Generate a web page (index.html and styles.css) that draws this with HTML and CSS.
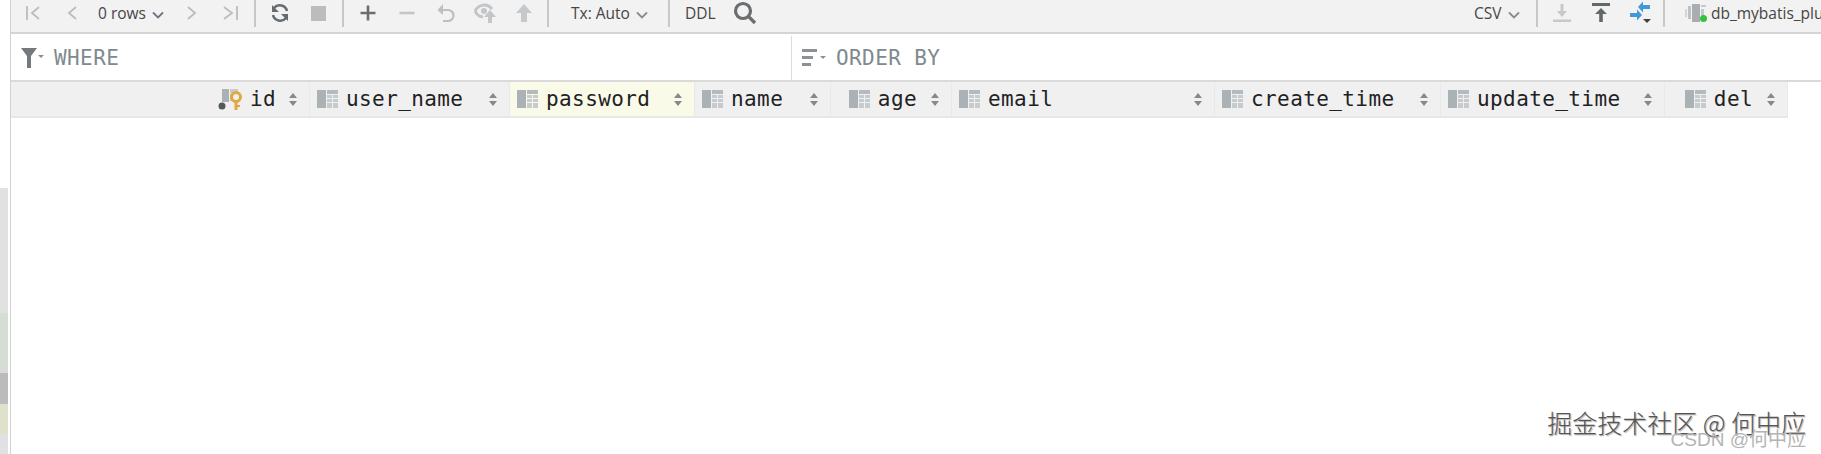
FILE: index.html
```html
<!DOCTYPE html>
<html lang="en">
<head>
    <meta charset="UTF-8">
    <title>Console result</title>
    <link rel="stylesheet" href="styles.css">
</head>
<body>
<div class="page">
    <!-- left edge of the window behind -->
    <div class="strip">
        <div class="s-white"></div>
        <div class="s-grey"></div>
        <div class="s-green"></div>
        <div class="s-dark"></div>
        <div class="s-yellow"></div>
        <div class="s-last"></div>
    </div>
    <div class="main">
        <div class="toolbar">
            <span class="btn"><svg width="18" height="18" viewBox="0 0 18 18" fill="none" stroke="#b9bdc1" stroke-width="1.8"><path d="M3 2v14M15 3L8 9l7 6"/></svg></span>
            <span class="btn"><svg width="18" height="18" viewBox="0 0 18 18" fill="none" stroke="#b9bdc1" stroke-width="1.8"><path d="M13 3L6 9l7 6"/></svg></span>
            <span class="drop rows">0 rows<svg class="chev" width="12" height="8" viewBox="0 0 12 8" fill="none" stroke="#6f7478" stroke-width="1.8"><path d="M1 1.5l5 5 5-5"/></svg></span>
            <span class="btn"><svg width="18" height="18" viewBox="0 0 18 18" fill="none" stroke="#b9bdc1" stroke-width="1.8"><path d="M5 3l7 6-7 6"/></svg></span>
            <span class="btn"><svg width="18" height="18" viewBox="0 0 18 18" fill="none" stroke="#b9bdc1" stroke-width="1.8"><path d="M2 3l8 6-8 6M15 2v14"/></svg></span>
            <i class="sep"></i>
            <span class="btn"><svg width="20" height="20" viewBox="0 0 20 20" fill="none" stroke="#666b6f" stroke-width="2.6"><path d="M17 8A7.5 7.5 0 0 0 4 5M3 12a7.500 7.500 0 0 0 13 3"/><path d="M2 2v7h7M18 18v-7h-7" stroke="none" fill="#666b6f"/></svg></span>
            <span class="btn"><span class="stop"></span></span>
            <i class="sep"></i>
            <span class="btn"><svg width="18" height="18" viewBox="0 0 18 18" fill="none" stroke="#686d70" stroke-width="2.6"><path d="M9 1.500v15M1.500 9h15"/></svg></span>
            <span class="btn"><svg width="18" height="18" viewBox="0 0 18 18" fill="none" stroke="#c3c6c8" stroke-width="2.600"><path d="M1.500 9h15"/></svg></span>
            <span class="btn"><svg width="20" height="20" viewBox="0 0 20 20" fill="none" stroke="#bdbfc0" stroke-width="2.200"><path d="M4 7h8a5 5 0 0 1 0 11H7"/><path d="M7 1v11L1.500 7z" fill="#bdbfc0" stroke="none"/></svg></span>
            <span class="btn"><svg width="22" height="22" viewBox="0 0 22 22" fill="none"><path d="M1 9c4-7 12-8 17-2" stroke="#c3c6c8" stroke-width="3"/><path d="M1 9c2 4 5 6 8 6" stroke="#c3c6c8" stroke-width="3"/><circle cx="10" cy="9" r="3" fill="#c3c6c8"/><path d="M16 8l6 7h-4v6h-4v-6h-4z" fill="#c3c6c8"/></svg></span>
            <span class="btn"><svg width="20" height="20" viewBox="0 0 20 20"><path d="M10 1l8 9h-5v9H7v-9H2z" fill="#c6c9cb"/></svg></span>
            <i class="sep"></i>
            <span class="drop tx">Tx: Auto<svg class="chev" width="12" height="8" viewBox="0 0 12 8" fill="none" stroke="#868b8f" stroke-width="1.8"><path d="M1 1.500l5 5 5-5"/></svg></span>
            <i class="sep"></i>
            <span class="drop ddl">DDL</span>
            <span class="btn search"><svg width="24" height="24" viewBox="0 0 24 24" fill="none" stroke="#6a6e71" stroke-width="3.200"><circle cx="10" cy="10" r="7.500"/><path d="M15.500 15.500l6.500 6.500"/></svg></span>
            <span class="drop csv">CSV<svg class="chev" width="12" height="8" viewBox="0 0 12 8" fill="none" stroke="#868b8f" stroke-width="1.800"><path d="M1 1.500l5 5 5-5"/></svg></span>
            <i class="sep"></i>
            <span class="btn"><svg width="20" height="20" viewBox="0 0 20 20" fill="#c6c9cb"><path d="M8.500 1h3v7H15l-5 6-5-6h3.500z"/><path d="M1 16.500h18v2.500H1z"/></svg></span>
            <span class="btn"><svg width="20" height="20" viewBox="0 0 20 20" fill="#63686b"><path d="M1 0h18v3H1z"/><path d="M10 5l6 6h-4.200v8H8.200v-8H4z"/></svg></span>
            <span class="btn"><svg width="24" height="24" viewBox="0 0 24 24"><path d="M2 13h7V9.500l5 5.500-5 5.500V17H2z" fill="#3d9ad6" transform="translate(0 -1)"/><path d="M22 7h-7V3.500L10 9l5 5.500V11h7z" fill="#3d9ad6" transform="translate(0 -3)"/><path d="M15 18h8l-4 4z" fill="#3e4245"/></svg></span>
            <i class="sep"></i>
            <span class="db">
                <svg width="22" height="20" viewBox="0 0 22 20"><path d="M0 6h2v8H0z" fill="#d3d5d7"/><path d="M3 3h3v13H3z" fill="#bfc2c4"/><path d="M7 1h8v18H7z" fill="#a9adb0"/><path d="M16 2h5v2h-5zM16 6h3v7h-3z" fill="#c6c9cb"/><circle cx="18.500" cy="15.500" r="3.500" fill="#2fc43c"/></svg>
                <span class="db-name">db_mybatis_plus</span>
            </span>
        </div>
        <div class="filters">
            <div class="where">
                <svg width="23" height="20" viewBox="0 0 23 20"><path d="M0 0h16l-6 8v12H6V8z" fill="#75797c"/><path d="M17 7h6l-3 3z" fill="#8a8e91"/></svg>
                <span class="f-label">WHERE</span>
            </div>
            <div class="order">
                <svg width="24" height="18" viewBox="0 0 24 18" fill="#8d9194"><path d="M0 0h15v3H0zM0 7h11v3H0zM0 14h9v3H0z"/><path d="M18 7h6l-3 3z"/></svg>
                <span class="f-label">ORDER BY</span>
            </div>
        </div>
        <div class="head">
            <div class="cell right pk">
                <svg class="ic" width="25" height="21" viewBox="0 0 25 21"><path d="M4 0h7v13H4z" fill="#aab2b6"/><path d="M12 0h8v4h-8zM12 5h3v3h-3zM12 9h3v3h-3z" fill="#c6cbcd"/><circle cx="4" cy="17" r="3.500" fill="#54585b"/><circle cx="18" cy="8" r="4.500" fill="none" stroke="#e0a83e" stroke-width="3"/><path d="M16.500 12h3v9h-3z" fill="#e0a83e"/><path d="M19 16h3v2h-3z" fill="#e0a83e"/></svg>
                <span class="lbl">id</span><svg class="sort" width="8" height="13" viewBox="0 0 8 13" fill="#85898c"><path d="M4 0l4 5H0zM0 8h8l-4 5z"/></svg>
            </div>
            <div class="cell">
                <svg class="ic" width="21" height="18" viewBox="0 0 21 18"><use href="#tbl"/></svg>
                <span class="lbl">user_name</span><svg class="sort" width="8" height="13" viewBox="0 0 8 13" fill="#85898c"><path d="M4 0l4 5H0zM0 8h8l-4 5z"/></svg>
            </div>
            <div class="cell current">
                <svg class="ic" width="21" height="18" viewBox="0 0 21 18"><use href="#tbl"/></svg>
                <span class="lbl">password</span><svg class="sort" width="8" height="13" viewBox="0 0 8 13" fill="#85898c"><path d="M4 0l4 5H0zM0 8h8l-4 5z"/></svg>
            </div>
            <div class="cell">
                <svg class="ic" width="21" height="18" viewBox="0 0 21 18"><use href="#tbl"/></svg>
                <span class="lbl">name</span><svg class="sort" width="8" height="13" viewBox="0 0 8 13" fill="#85898c"><path d="M4 0l4 5H0zM0 8h8l-4 5z"/></svg>
            </div>
            <div class="cell right">
                <svg class="ic" width="21" height="18" viewBox="0 0 21 18"><use href="#tbl"/></svg>
                <span class="lbl">age</span><svg class="sort" width="8" height="13" viewBox="0 0 8 13" fill="#85898c"><path d="M4 0l4 5H0zM0 8h8l-4 5z"/></svg>
            </div>
            <div class="cell">
                <svg class="ic" width="21" height="18" viewBox="0 0 21 18"><use href="#tbl"/></svg>
                <span class="lbl">email</span><svg class="sort" width="8" height="13" viewBox="0 0 8 13" fill="#85898c"><path d="M4 0l4 5H0zM0 8h8l-4 5z"/></svg>
            </div>
            <div class="cell">
                <svg class="ic" width="21" height="18" viewBox="0 0 21 18"><use href="#tbl"/></svg>
                <span class="lbl">create_time</span><svg class="sort" width="8" height="13" viewBox="0 0 8 13" fill="#85898c"><path d="M4 0l4 5H0zM0 8h8l-4 5z"/></svg>
            </div>
            <div class="cell">
                <svg class="ic" width="21" height="18" viewBox="0 0 21 18"><use href="#tbl"/></svg>
                <span class="lbl">update_time</span><svg class="sort" width="8" height="13" viewBox="0 0 8 13" fill="#85898c"><path d="M4 0l4 5H0zM0 8h8l-4 5z"/></svg>
            </div>
            <div class="cell right">
                <svg class="ic" width="21" height="18" viewBox="0 0 21 18"><use href="#tbl"/></svg>
                <span class="lbl">del</span><svg class="sort" width="8" height="13" viewBox="0 0 8 13" fill="#85898c"><path d="M4 0l4 5H0zM0 8h8l-4 5z"/></svg>
            </div>
        </div>
    </div>
</div>
<div class="mark">掘金技术社区 @ 何中应</div>
<div class="mark2">CSDN @何中应</div>
<svg class="defs" width="0" height="0">
    <symbol id="tbl" viewBox="0 0 21 18">
        <path d="M0 0h9v18H0z" fill="#aab2b6"/>
        <path d="M10 0h11v4H10z" fill="#b4babd"/>
        <path d="M10 5h5v3h-5zM16 5h5v3h-5zM10 9h5v3h-5zM16 9h5v3h-5zM10 13h5v5h-5zM16 13h5v5h-5z" fill="#c6cbcd"/>
    </symbol>
</svg>
</body>
</html>
```

FILE: styles.css
```css
* {
    margin: 0;
    padding: 0;
    box-sizing: border-box;
}

html, body {
    width: 1821px;
    height: 454px;
    overflow: hidden;
    background: #fff;
}

.page {
    display: flex;
    height: 454px;
}

.defs {
    display: block;
}

/* window behind */
.strip {
    width: 10px;
    display: flex;
    flex-direction: column;
    padding-right: 2px;
    flex: none;
}

.s-white { height: 188px; background: #fff; }
.s-grey { height: 125px; background: #e1e1e1; }
.s-green { height: 60px; background: #d6ddd4; }
.s-dark { height: 31px; background: #bbbbbb; }
.s-yellow { height: 30px; background: #e0e1ca; }
.s-last { height: 20px; background: #e1e1e5; }

.main {
    flex: 1;
    min-width: 0;
    border-left: 1px solid #d2d2d2;
}

.toolbar {
    height: 34px;
    padding: 0 0 6px 2px;
    display: flex;
    align-items: center;
    background: #f2f2f2;
    border-bottom: 2px solid #d4d4d4;
    font-family: "Open Sans", sans-serif;
    font-size: 15.5px;
    color: #454545;
    white-space: nowrap;
    overflow: hidden;
}

.btn {
    width: 39px;
    height: 26px;
    display: flex;
    align-items: center;
    justify-content: center;
    flex: none;
}

.sep {
    width: 1.5px;
    height: 28px;
    margin: 0 4.25px;
    background: #c8c8c8;
    flex: none;
}

.stop {
    width: 15px;
    height: 15px;
    background: #bcbcbc;
}

.drop {
    display: flex;
    align-items: center;
    flex: none;
}

.chev {
    margin-left: 6px;
    margin-top: 3px;
}

.rows { width: 81px; padding-left: 7px; }
.tx { width: 111px; padding-left: 18px; }
.ddl { width: 45px; padding-left: 11px; }
.search { margin-left: 6px; margin-right: 710px; }
.csv { width: 58px; }
.db { display: flex; align-items: center; margin-left: 16px; }
.db-name { margin-left: 4px; }

.filters {
    height: 48px;
    padding-top: 2px;
    display: flex;
    border-bottom: 2px solid #dadada;
    font-family: "DejaVu Sans Mono", monospace;
    font-size: 21px;
    color: #808a8e;
}

.where, .order {
    display: flex;
    align-items: center;
}

.where {
    width: 781px;
    padding-left: 10px;
    border-right: 1px solid #dcdcdc;
}

.order {
    padding-left: 10px;
}

.f-label {
    margin-left: 10px;
    letter-spacing: .4px;
}

.head {
    width: 1777px;
    height: 36px;
    display: grid;
    grid-template-columns: 299px 200px 185px 136px 121px 263px 226px 224px 123px;
    background: #f0f0f0;
    border-bottom: 2px solid #e7e7e7;
    font-family: "DejaVu Sans Mono", monospace;
    font-size: 21px;
    letter-spacing: .4px;
    color: #1f2224;
}

.cell {
    display: flex;
    align-items: center;
    padding: 0 12px 0 7px;
    border-right: 1px solid #e9e9e9;
}

.cell.current {
    background: #fafae9;
}

.ic {
    flex: none;
    margin-right: 8px;
}

.lbl {
    margin-right: auto;
}

.sort {
    flex: none;
}

.right {
    justify-content: flex-end;
}

.right .lbl {
    margin-right: 14px;
}

.pk .ic {
    margin-right: 7px;
}

.pk .lbl {
    margin-right: 13px;
}

/* watermarks */
.mark {
    position: absolute;
    right: 15px;
    top: 406px;
    font-family: "Noto Sans CJK SC", sans-serif;
    font-weight: 300;
    font-size: 25px;
    line-height: 32px;
    color: #555;
    text-shadow: 1px 1px 1px #aaa;
    white-space: nowrap;
}

.mark2 {
    position: absolute;
    right: 15px;
    top: 429px;
    font-family: "Liberation Sans", "Noto Sans CJK SC", sans-serif;
    font-size: 19px;
    line-height: 22px;
    color: #b4b4b4;
    white-space: nowrap;
}
```
